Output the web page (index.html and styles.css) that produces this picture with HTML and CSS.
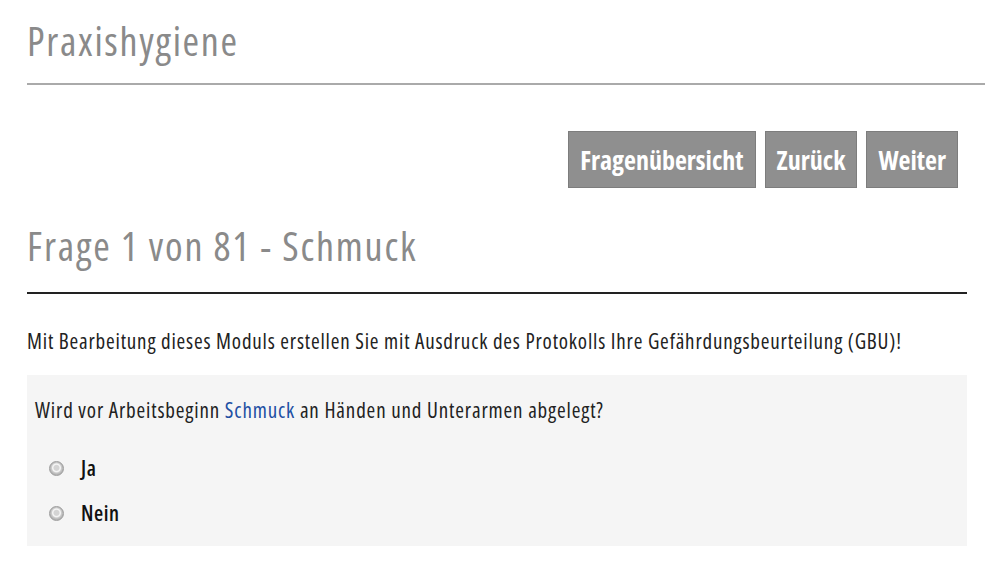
FILE: index.html
```html
<!DOCTYPE html>
<html lang="de">
<head>
<meta charset="utf-8">
<title>Praxishygiene</title>
<link rel="stylesheet" href="styles.css">
</head>
<body>
<div class="page">
  <header class="site-head">
    <h1 class="site-title">Praxishygiene</h1>
  </header>
  <main class="content">
    <nav class="actions">
      <a class="btn" href="#">Fragenübersicht</a>
      <a class="btn" href="#">Zurück</a>
      <a class="btn" href="#">Weiter</a>
    </nav>
    <h2 class="question-title">Frage 1 von 81 - Schmuck</h2>
    <p class="intro">Mit Bearbeitung dieses Moduls erstellen Sie mit Ausdruck des Protokolls Ihre Gefährdungsbeurteilung (GBU)!</p>
    <section class="question-box">
      <p class="question">Wird vor Arbeitsbeginn <a class="term" href="#">Schmuck</a> an Händen und Unterarmen abgelegt?</p>
      <div class="options">
        <label class="option"><input class="radio" type="radio" name="q1"><span>Ja</span></label>
        <label class="option"><input class="radio" type="radio" name="q1"><span>Nein</span></label>
      </div>
    </section>
  </main>
</div>
</body>
</html>
```

FILE: styles.css
```css
* { box-sizing: border-box; }
html, body { margin: 0; padding: 0; background: #fff; }
body {
  font-family: "Open Sans", "Noto Sans", sans-serif;
  font-stretch: 75%;
  color: #222;
}
.page { padding: 0 15px 0 27px; }

.site-head {
  padding: 17px 0 18px;
  border-bottom: 2px solid #aaa;
}
.site-title {
  margin: 0;
  font-size: 40px;
  line-height: 48px;
  font-weight: normal;
  letter-spacing: 1.7px;
  color: #8a8a8a;
}

.content { width: 940px; display: flex; flex-direction: column; }

.actions {
  margin-top: 46px;
  display: flex;
  justify-content: flex-end;
  gap: 9px;
  padding-right: 9px;
}
.btn {
  display: flex;
  align-items: center;
  height: 57px;
  padding: 0 11px;
  background: #8f8f8f;
  border: 1px solid #7d7d7d;
  color: #fff;
  font-weight: bold;
  font-size: 26px;
  text-decoration: none;
}

.question-title {
  margin: 34px 0 0;
  padding-bottom: 22px;
  border-bottom: 2px solid #222;
  font-size: 40px;
  line-height: 48px;
  font-weight: normal;
  letter-spacing: 1.8px;
  color: #8a8a8a;
}

.intro {
  margin: 34px 0 0;
  font-size: 21px;
  line-height: 27px;
  letter-spacing: 0.82px;
}

.question-box {
  margin-top: 20px;
  background: #f5f5f5;
  padding: 22px 8px 19px;
}
.question {
  margin: 0;
  font-size: 21px;
  line-height: 27px;
  letter-spacing: 0.85px;
}
.term { color: #1d4fa3; text-decoration: none; }

.options { display: flex; flex-direction: column; gap: 18px; margin-top: 31px; padding-left: 14px; }
.option {
  display: flex;
  align-items: center;
  gap: 17px;
  font-size: 21px;
  line-height: 27px;
  font-weight: 600;
  letter-spacing: 0.6px;
  color: #111;
}
.radio {
  appearance: none;
  -webkit-appearance: none;
  flex: none;
  margin: 0;
  width: 15px;
  height: 15px;
  border-radius: 50%;
  border: 1px solid #9c9c9c;
  background: radial-gradient(circle at 50% 45%, #d4d4d4 0 2.5px, #f4f4f4 3.5px 4px, #cccccc 5px, #b4b4b4 6.5px);
}
```
